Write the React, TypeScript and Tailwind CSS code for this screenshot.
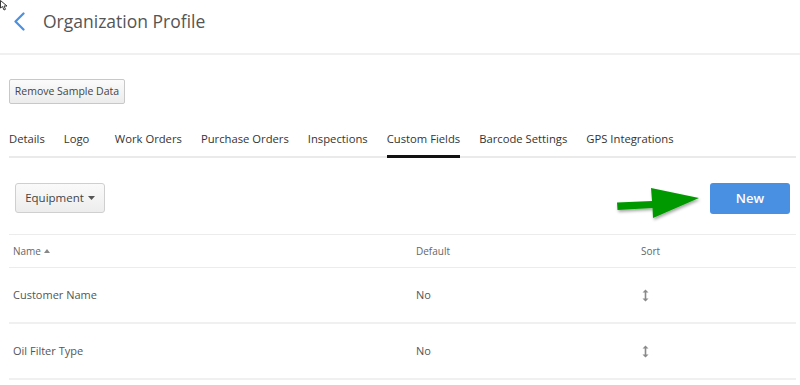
import React from "react";

const tabs = [
  { label: "Details", cls: "" },
  { label: "Logo", cls: "w-[32px]" },
  { label: "Work Orders", cls: "" },
  { label: "Purchase Orders", cls: "" },
  { label: "Inspections", cls: "" },
  { label: "Custom Fields", cls: "", active: true },
  { label: "Barcode Settings", cls: "" },
  { label: "GPS Integrations", cls: "" },
];

const rows = [
  { name: "Customer Name", def: "No" },
  { name: "Oil Filter Type", def: "No" },
];

function SortIcon() {
  return (
    <svg width="7" height="13" viewBox="0 0 7 13" className="block">
      <path d="M3.5 0.5 L6.5 3.5 H4.3 V9.5 H6.5 L3.5 12.5 L0.5 9.5 H2.7 V3.5 H0.5 Z" fill="#8a8a8a" />
    </svg>
  );
}

export default function App() {
  return (
    <div
      className="relative w-[800px] h-[385px] bg-white overflow-hidden"
      style={{ fontFamily: '"Open Sans", "Liberation Sans", sans-serif' }}
    >
      {/* cursor */}
      <svg className="absolute left-0 top-0" width="10" height="12" viewBox="0 0 10 12">
        <path d="M0.5 0.5 L0.5 8 L2.5 6.5 L4 10 L5.5 9.3 L4 6 L7 6 Z" fill="white" stroke="#222" strokeWidth="0.9" />
      </svg>

      {/* header */}
      <div className="h-[55px] flex items-center pl-[13px] border-b-2 border-[#f0f0f0]">
        <svg width="13" height="19" viewBox="0 0 13 19" className="mt-[-11px]">
          <path d="M10.5 1.5 L2.5 9.5 L10.5 17.5" fill="none" stroke="#4a8fe0" strokeWidth="2.2" strokeLinecap="round" strokeLinejoin="round" />
        </svg>
        <div className="ml-[17px] mt-[-10px] text-[17.5px] text-[#555]">Organization Profile</div>
      </div>

      <div className="pl-[9px] pr-[4px]">
        {/* remove sample data */}
        <div className="pt-[24px]">
          <button className="h-[25px] w-[116px] rounded-[2px] border border-[#c8c8c8] bg-gradient-to-b from-[#fbfbfb] to-[#ececec] text-[10.5px] text-[#444] flex items-center justify-center">
            Remove Sample Data
          </button>
        </div>

        {/* tabs */}
        <div className="mt-[21px] flex gap-[19px] border-b-2 border-[#eaeaea] h-[33px]">
          {tabs.map((t) => (
            <div
              key={t.label}
              className={`relative h-[31px] flex items-center text-[11.25px] text-[#333] whitespace-nowrap ${t.cls}`}
            >
              <span className="mt-[-2px]">{t.label}</span>
              {t.active && <div className="absolute left-0 right-0 bottom-[-2px] h-[3px] bg-[#111]" />}
            </div>
          ))}
        </div>

        {/* toolbar */}
        <div className="flex justify-between items-start px-[6px] pt-[25px] h-[76px]">
          <button className="h-[30px] w-[90px] rounded-[3px] border border-[#cfcfcf] bg-gradient-to-b from-[#fafafa] to-[#ededed] text-[11.5px] text-[#444] flex items-center justify-center gap-[4px]">
            Equipment
            <svg width="7" height="4" viewBox="0 0 7 4">
              <path d="M0 0 H7 L3.5 4 Z" fill="#555" />
            </svg>
          </button>
          <button className="h-[31px] w-[80px] rounded-[3px] bg-[#4a90e2] text-white text-[13px] font-semibold flex items-center justify-center">
            New
          </button>
        </div>

        {/* table */}
        <div className="border-t border-[#ececec]">
          <div className="h-[33px] flex items-center text-[10px] text-[#666] border-b border-[#ececec]">
            <div className="w-[407px] pl-[4px] flex items-center gap-[3px]">
              Name
              <svg width="6" height="4" viewBox="0 0 6 4">
                <path d="M0 4 H6 L3 0 Z" fill="#888" />
              </svg>
            </div>
            <div className="w-[225px]">Default</div>
            <div>Sort</div>
          </div>
          {rows.map((r) => (
            <div key={r.name} className="h-[56px] flex items-center text-[11px] text-[#555] border-b-2 border-[#f0f0f0]">
              <div className="w-[407px] pl-[4px]">{r.name}</div>
              <div className="w-[226px]">{r.def}</div>
              <div>
                <SortIcon />
              </div>
            </div>
          ))}
        </div>
      </div>

      {/* green arrow */}
      <svg className="absolute left-[612px] top-[183px]" width="95" height="40" viewBox="0 0 95 40">
        <defs>
          <filter id="sh" x="-20%" y="-20%" width="140%" height="160%">
            <feDropShadow dx="1" dy="2" stdDeviation="1.5" floodColor="#000" floodOpacity="0.35" />
          </filter>
        </defs>
        <path
          d="M5 19.5 L40 18 L39 5 L87 15 L41 35 L40.5 25 L5.5 27 Z"
          fill="#009a00"
          filter="url(#sh)"
        />
      </svg>
    </div>
  );
}
